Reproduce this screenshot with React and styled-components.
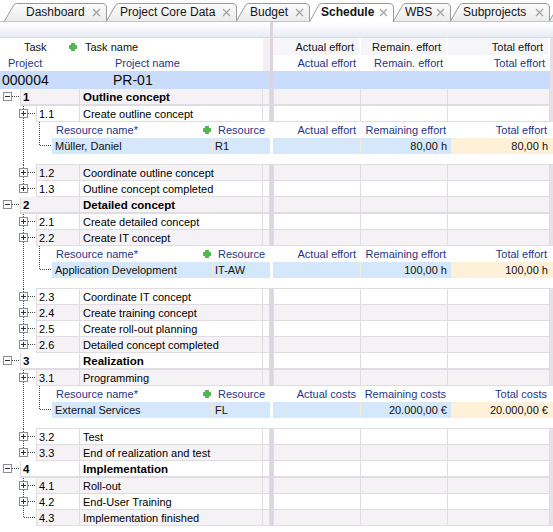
import styled, { createGlobalStyle } from 'styled-components';

const GlobalStyle = createGlobalStyle`
  html, body { margin: 0; padding: 0; background: #fff; }
  body {
    font-family: "Liberation Sans", Arial, sans-serif;
    font-size: 11px;
    color: #000;
  }
`;

const GREY = '#f4f2f5';
const LINE = '#e0dce3';
const NAVY = '#1f3588';

const tabs = [
  { label: 'Dashboard', width: 104, pad: 22 },
  { label: 'Project Core Data', width: 132, pad: 14 },
  { label: 'Budget', width: 75, pad: 14 },
  { label: 'Schedule', width: 86, pad: 12, active: true },
  { label: 'WBS', width: 59, pad: 12 },
  { label: 'Subprojects', width: 101, pad: 13 },
  { label: '', width: 40, pad: 12 },
];

const effortLabels = ['Actual effort', 'Remaining effort', 'Total effort'];
const costLabels = ['Actual costs', 'Remaining costs', 'Total costs'];

const rows = [
  { group: true, num: '1', name: 'Outline concept' },
  { num: '1.1', name: 'Create outline concept', res: { name: 'Müller, Daniel', code: 'R1', labels: effortLabels, remaining: '80,00 h', total: '80,00 h' } },
  { num: '1.2', name: 'Coordinate outline concept' },
  { num: '1.3', name: 'Outline concept completed', last: true },
  { group: true, num: '2', name: 'Detailed concept' },
  { num: '2.1', name: 'Create detailed concept' },
  { num: '2.2', name: 'Create IT concept', res: { name: 'Application Development', code: 'IT-AW', labels: effortLabels, remaining: '100,00 h', total: '100,00 h' } },
  { num: '2.3', name: 'Coordinate IT concept' },
  { num: '2.4', name: 'Create training concept' },
  { num: '2.5', name: 'Create roll-out planning' },
  { num: '2.6', name: 'Detailed concept completed', last: true },
  { group: true, num: '3', name: 'Realization' },
  { num: '3.1', name: 'Programming', res: { name: 'External Services', code: 'FL', labels: costLabels, remaining: '20.000,00 €', total: '20.000,00 €' } },
  { num: '3.2', name: 'Test' },
  { num: '3.3', name: 'End of realization and test', last: true },
  { group: true, num: '4', name: 'Implementation' },
  { num: '4.1', name: 'Roll-out' },
  { num: '4.2', name: 'End-User Training' },
  { num: '4.3', name: 'Implementation finished', last: true, leaf: true },
];

export default function App() {
  return (
    <>
      <GlobalStyle />
      <Page>
        <TabBar>
          {tabs.map((t, i) => (
            <Tab key={i} $w={t.width} $pad={t.pad} $active={t.active}>
              <TabShape width={t.width} height={t.active ? 19 : 18}>
                <path
                  d={`M0.5 ${t.active ? 19 : 18} L9.5 2.5 Q10.5 0.5 12.5 0.5 H${t.width - 6} Q${t.width - 1.5} 0.5 ${t.width - 1.5} 5 V${t.active ? 19 : 18} Z`}
                  fill={t.active ? '#fff' : 'url(#tabfill)'}
                />
                <path
                  d={`M0.5 ${t.active ? 19 : 18} L9.5 2.5 Q10.5 0.5 12.5 0.5 H${t.width - 6} Q${t.width - 1.5} 0.5 ${t.width - 1.5} 5 V${t.active ? 19 : 18}`}
                  fill="none"
                  stroke="#9a9a9a"
                />
                <defs>
                  <linearGradient id="tabfill" x1="0" y1="0" x2="0" y2="1">
                    <stop offset="0" stopColor="#fbfbfb" />
                    <stop offset="1" stopColor="#ececec" />
                  </linearGradient>
                </defs>
              </TabShape>
              <span>{t.label}</span>
              {t.label && <CloseX />}
            </Tab>
          ))}
        </TabBar>

        <Row $h={16}>
          <StripPart $w={270} />
          <Split />
          <StripPart $w={283} />
        </Row>

        <Row $h={17}>
          <Left>
            <HeadCell $w={20} />
            <HeadCell $w={46} $pad={4}>Task</HeadCell>
            <HeadCell $w={14} $center><PlusIcon /></HeadCell>
            <HeadCell $w={183} $pad={5}>Task name</HeadCell>
            <HeadCell $w={7} $tail />
          </Left>
          <Split />
          <Right>
            <HeadCell $w={88} $right $shade>Actual effort</HeadCell>
            <HeadCell $w={87} $right $shade>Remain. effort</HeadCell>
            <HeadCell $w={102} $right $shade>Total effort</HeadCell>
            <Edge />
          </Right>
        </Row>

        <Row $h={16}>
          <Left>
            <HeadCell $w={110} $pad={8} $navy>Project</HeadCell>
            <HeadCell $w={153} $pad={5} $navy>Project name</HeadCell>
            <HeadCell $w={7} $tail />
          </Left>
          <Split />
          <Right>
            <HeadCell $w={88} $right $navy>Actual effort</HeadCell>
            <HeadCell $w={87} $right $navy>Remain. effort</HeadCell>
            <HeadCell $w={102} $right $navy>Total effort</HeadCell>
            <Edge />
          </Right>
        </Row>

        <Row $h={18}>
          <Left>
            <ProjectCell $w={110} $pad={2}>000004</ProjectCell>
            <ProjectCell $w={153} $pad={3}>PR-01</ProjectCell>
            <ProjectCell $w={7} />
          </Left>
          <Split />
          <Right>
            <ProjectCell $w={277} />
            <Edge />
          </Right>
        </Row>

        {rows.map((r, i) =>
          r.group ? (
            <GroupRow key={r.num} row={r} alt={i % 2 === 0} />
          ) : (
            <TaskRow key={r.num} row={r} alt={i % 2 === 0} />
          )
        )}
      </Page>
    </>
  );
}

function Dots({ x1, y1, x2, y2 }) {
  return (
    <line x1={x1} y1={y1} x2={x2} y2={y2} stroke="#4a4a4a" strokeDasharray="1 1" shapeRendering="crispEdges" />
  );
}

function Toggle({ x, open }) {
  return (
    <g shapeRendering="crispEdges">
      <rect x={x + 0.5} y={3.5} width={8} height={8} fill="#fbfbfb" stroke="#8c8e96" />
      <line x1={x + 2} y1={7.5} x2={x + 7} y2={7.5} stroke="#2b3445" />
      {!open && <line x1={x + 4.5} y1={5} x2={x + 4.5} y2={10} stroke="#2b3445" />}
    </g>
  );
}

function PlusIcon() {
  return (
    <svg width="8" height="8" viewBox="0 0 8 8">
      <path d="M2.5 .5h3v2h2v3h-2v2h-3v-2h-2v-3h2z" fill="#4fbe47" stroke="#2f9b30" strokeWidth="0.7" />
    </svg>
  );
}

function CloseX() {
  return (
    <svg width="9" height="9" viewBox="0 0 9 9">
      <path d="M1 1L8 8M8 1L1 8" stroke="#a2a2a2" strokeWidth="1.2" />
    </svg>
  );
}

function RightCells({ alt, bb }) {
  return (
    <Right>
      <Cell $w={88} $bl $alt={alt} $bb={bb} />
      <Cell $w={87} $alt={alt} $bb={bb} />
      <Cell $w={102} $alt={alt} $bb={bb} />
      <Edge />
    </Right>
  );
}

function GroupRow({ row, alt }) {
  return (
    <Row $h={17}>
      <Left>
        <Gutter $w={20}>
          <svg width="20" height="17">
            <Dots x1={12} y1={7.5} x2={20} y2={7.5} />
            <Toggle x={3} open />
          </svg>
        </Gutter>
        <Cell $w={60} $bl $alt={alt} $bb={2} $bold $pad={2}>{row.num}</Cell>
        <Cell $w={183} $alt={alt} $bb={2} $bold>{row.name}</Cell>
        <Cell $w={7} $alt={alt} $bb={2} />
      </Left>
      <Split />
      <RightCells alt={alt} bb={2} />
    </Row>
  );
}

function TaskRow({ row, alt }) {
  return (
    <>
      <Row $h={16}>
        <Left>
          <Gutter $w={36}>
            <svg width="36" height="16">
              <Dots x1={23.5} y1={0} x2={23.5} y2={row.last ? 8 : 16} />
              <Dots x1={row.leaf ? 24 : 28} y1={7.5} x2={36} y2={7.5} />
              {!row.leaf && <Toggle x={19} />}
            </svg>
          </Gutter>
          <Cell $w={44} $bl $alt={alt} $pad={2}>{row.num}</Cell>
          <Cell $w={183} $alt={alt}>{row.name}</Cell>
          <Cell $w={7} $alt={alt} />
        </Left>
        <Split />
        <RightCells alt={alt} bb={1} />
      </Row>
      {row.res && <ResourceBlock res={row.res} />}
    </>
  );
}

function ResourceBlock({ res }) {
  return (
    <>
      <Row $h={16}>
        <Left>
          <Gutter $w={52}>
            <svg width="52" height="16">
              <Dots x1={23.5} y1={0} x2={23.5} y2={16} />
              <Dots x1={39.5} y1={0} x2={39.5} y2={16} />
            </svg>
          </Gutter>
          <ResHead $w={161} $pad={4} $spread>
            <span>Resource name*</span>
            <PlusIcon />
          </ResHead>
          <ResHead $w={57} $pad={5}>Resource</ResHead>
        </Left>
        <Split $white />
        <Right>
          <ResHead $w={88} $right $pad={5}>{res.labels[0]}</ResHead>
          <ResHead $w={90} $right $pad={5}>{res.labels[1]}</ResHead>
          <ResHead $w={102} $right $pad={6}>{res.labels[2]}</ResHead>
        </Right>
      </Row>
      <Row $h={16}>
        <Left>
          <Gutter $w={52}>
            <svg width="52" height="16">
              <Dots x1={23.5} y1={0} x2={23.5} y2={16} />
              <Dots x1={39.5} y1={0} x2={39.5} y2={8} />
              <Dots x1={40} y1={7.5} x2={52} y2={7.5} />
            </svg>
          </Gutter>
          <DataCell $w={161} $pad={3} $sep>{res.name}</DataCell>
          <DataCell $w={57} $pad={2}>{res.code}</DataCell>
        </Left>
        <Split $white />
        <Right>
          <DataCell $w={88} $sep />
          <DataCell $w={90} $right $pad={4}>{res.remaining}</DataCell>
          <DataCell $w={102} $right $pad={5} $orange>{res.total}</DataCell>
        </Right>
      </Row>
      <Row $h={11}>
        <Gutter $w={36}>
          <svg width="36" height="11">
            <Dots x1={23.5} y1={0} x2={23.5} y2={11} />
          </svg>
        </Gutter>
        <SpacerFill />
      </Row>
    </>
  );
}

const Page = styled.div`
  width: 553px;
  height: 532px;
  overflow: hidden;
  background: #fff;
`;

const TabBar = styled.div`
  height: 22px;
  box-sizing: border-box;
  display: flex;
  align-items: flex-end;
  padding-left: 4px;
  border-bottom: 1px solid #c4c4c4;
`;

const Tab = styled.div`
  position: relative;
  flex: none;
  box-sizing: border-box;
  width: ${p => p.$w}px;
  height: ${p => (p.$active ? 19 : 18)}px;
  margin-left: -2px;
  margin-bottom: ${p => (p.$active ? -1 : 0)}px;
  z-index: ${p => (p.$active ? 3 : 1)};
  display: flex;
  align-items: center;
  justify-content: space-between;
  padding: 0 7px ${p => (p.$active ? 1 : 0)}px ${p => p.$pad}px;
  font-size: 12px;
  font-weight: ${p => (p.$active ? 700 : 400)};
  color: #151515;
  white-space: nowrap;

  &:first-child {
    margin-left: 0;
  }
  svg:last-child {
    flex: none;
  }
`;

const TabShape = styled.svg`
  position: absolute;
  left: 0;
  top: 0;
  z-index: -1;
`;

const Row = styled.div`
  display: flex;
  height: ${p => p.$h}px;
`;

const Left = styled.div`
  width: 270px;
  flex: none;
  display: flex;
  height: 100%;
`;

const Right = styled.div`
  flex: 1;
  display: flex;
  height: 100%;
`;

const Split = styled.div`
  width: 3px;
  flex: none;
  height: 100%;
  background: ${p => (p.$white ? '#fff' : '#dcd5df')};
`;

const Edge = styled.div`
  flex: 1;
  height: 100%;
  background: #e6e1e8;
`;

const StripPart = styled.div`
  width: ${p => p.$w}px;
  flex: none;
  box-sizing: border-box;
  height: 100%;
  background: linear-gradient(#ffffff, #e8ecf4);
  border-bottom: 1px solid #d6dae2;
`;

const Gutter = styled.div`
  width: ${p => p.$w}px;
  flex: none;
  height: 100%;
  background: #fff;

  svg {
    display: block;
  }
`;

const Cell = styled.div`
  box-sizing: border-box;
  flex: none;
  width: ${p => p.$w}px;
  height: 100%;
  display: flex;
  align-items: center;
  padding: 0 0 0 ${p => p.$pad ?? 3}px;
  background: ${p => (p.$alt ? GREY : '#fff')};
  border-left: ${p => (p.$bl ? `1px solid ${LINE}` : 'none')};
  border-right: 1px solid ${LINE};
  border-bottom: ${p => p.$bb ?? 1}px solid ${LINE};
  font-weight: ${p => (p.$bold ? 700 : 400)};
  font-size: ${p => (p.$bold ? 11.5 : 11)}px;
  white-space: nowrap;
  overflow: hidden;
`;

const HeadCell = styled.div`
  box-sizing: border-box;
  flex: none;
  width: ${p => p.$w}px;
  height: 100%;
  display: flex;
  align-items: center;
  justify-content: ${p => (p.$right ? 'flex-end' : p.$center ? 'center' : 'flex-start')};
  padding: 0 ${p => (p.$right ? 5 : 0)}px 0 ${p => p.$pad ?? 0}px;
  background: ${p => (p.$tail ? '#f2f0f3' : p.$shade ? '#f6f6f8' : '#fff')};
  border-right: ${p => (p.$shade ? '2px solid #fff' : 'none')};
  color: ${p => (p.$navy ? NAVY : '#111')};
  white-space: nowrap;
`;

const ProjectCell = styled.div`
  box-sizing: border-box;
  flex: none;
  width: ${p => p.$w}px;
  height: 100%;
  display: flex;
  align-items: center;
  padding-left: ${p => p.$pad ?? 0}px;
  background: #c9dcfb;
  font-size: 14px;
  color: #0c0c0c;
  white-space: nowrap;
`;

const ResHead = styled.div`
  box-sizing: border-box;
  flex: none;
  width: ${p => p.$w}px;
  height: 100%;
  display: flex;
  align-items: center;
  justify-content: ${p => (p.$right ? 'flex-end' : p.$spread ? 'space-between' : 'flex-start')};
  padding: ${p => (p.$right ? `0 ${p.$pad}px 0 0` : `0 2px 0 ${p.$pad}px`)};
  background: #fff;
  color: ${NAVY};
  white-space: nowrap;
`;

const DataCell = styled.div`
  box-sizing: border-box;
  flex: none;
  width: ${p => p.$w}px;
  height: 100%;
  display: flex;
  align-items: center;
  justify-content: ${p => (p.$right ? 'flex-end' : 'flex-start')};
  padding: ${p => (p.$right ? `0 ${p.$pad}px 0 0` : `0 0 0 ${p.$pad ?? 0}px`)};
  background: ${p => (p.$orange ? '#fff0da' : '#d4e7fb')};
  border-right: ${p => (p.$sep ? '1px solid #f6ecd4' : 'none')};
  color: #111;
  white-space: nowrap;
`;

const SpacerFill = styled.div`
  flex: 1;
  height: 100%;
  box-sizing: border-box;
  border-bottom: 1px solid ${LINE};
  background: #fff;
`;
